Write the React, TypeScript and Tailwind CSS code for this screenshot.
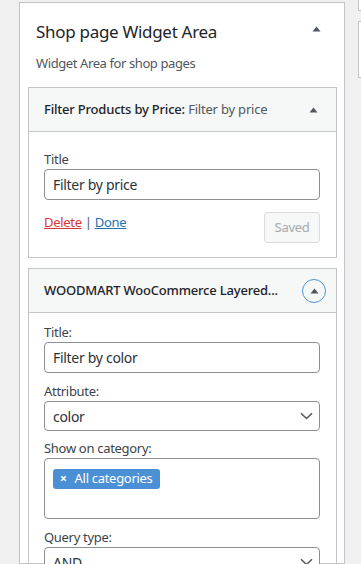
const Tri = () => (
  <svg width="9" height="6" viewBox="0 0 9 6" className="block">
    <path d="M4.5 0.5 L8.5 5.5 L0.5 5.5 Z" fill="#50575e" />
  </svg>
);

const Chevron = () => (
  <svg width="13" height="8" viewBox="0 0 13 8" className="block">
    <path d="M1 1.2 L6.5 6.5 L12 1.2" fill="none" stroke="#50575e" strokeWidth="1.5" />
  </svg>
);

const Label = ({ children }: { children: string }) => (
  <label className="block text-[13px] leading-5 text-[#3c434a]">{children}</label>
);

const TextInput = ({ value }: { value: string }) => (
  <div className="flex h-[31px] w-[276px] items-center rounded-[4px] border border-[#8c8f94] bg-white px-2 text-[14px] text-[#2c3338]">
    {value}
  </div>
);

const Select = ({ value }: { value: string }) => (
  <div className="flex h-[30px] w-[276px] items-center justify-between rounded-[4px] border border-[#8c8f94] bg-white pl-2 pr-[6px] text-[14px] text-[#2c3338]">
    <span>{value}</span>
    <Chevron />
  </div>
);

export default function App() {
  return (
    <div
      className="flex h-[564px] w-[361px] overflow-hidden bg-[#f0f0f1] tracking-[-0.3px]"
      style={{ fontFamily: '"Noto Sans", "Open Sans", sans-serif' }}
    >
      {/* sidebar */}
      <div className="ml-[19px] mt-[2px] w-[326px] shrink-0 border border-[#c3c4c7] bg-white">
        <div className="flex items-start justify-between pl-4 pr-[23px] pt-[16px]">
          <h2 className="text-[17px] leading-[26px] tracking-[-0.3px] text-[#1d2327]">Shop page Widget Area</h2>
          <div className="pt-[7px]">
            <Tri />
          </div>
        </div>
        <p className="pl-4 pt-[8px] text-[13px] leading-5 tracking-[-0.4px] text-[#50575e]">Widget Area for shop pages</p>

        {/* widget 1 */}
        <div className="ml-[8px] mt-[14px] w-[309px] border border-[#c3c4c7]">
          <div className="flex h-[44px] items-center justify-between border-b border-[#c3c4c7] bg-[#f6f7f7] pl-[15px] pr-[18px]">
            <h3 className="text-[13px] tracking-[-0.2px] text-[#1d2327]">
              <span className="font-medium">Filter Products by Price:</span>{' '}
              <span className="text-[#50575e]">Filter by price</span>
            </h3>
            <Tri />
          </div>
          <div className="pl-[15px] pr-4 pb-[14px] pt-[17px]">
            <Label>Title</Label>
            <TextInput value="Filter by price" />
            <div className="mt-[12px] flex items-start justify-between">
              <div className="text-[13px] leading-5 text-[#2271b1]">
                <a className="text-[#d63638] underline">Delete</a> <span className="text-[#50575e]">|</span>{' '}
                <a className="underline">Done</a>
              </div>
              <button className="h-[31px] w-[56px] rounded-[3px] border border-[#dcdcde] bg-[#f6f7f7] text-[13px] text-[#a7aaad]">
                Saved
              </button>
            </div>
          </div>
        </div>

        {/* widget 2 */}
        <div className="ml-[8px] mt-[10px] w-[309px] border border-b-0 border-[#c3c4c7]">
          <div className="flex h-[44px] items-center justify-between border-b border-[#c3c4c7] bg-[#f6f7f7] pl-[15px] pr-[10px]">
            <h3 className="text-[13px] font-medium tracking-[-0.2px] text-[#1d2327]">WOODMART WooCommerce Layered...</h3>
            <div className="flex h-[24px] w-[24px] items-center justify-center rounded-full border-[1.5px] border-[#4f94d4]">
              <Tri />
            </div>
          </div>
          <div className="pl-[15px] pr-4 pt-[9px]">
            <Label>Title:</Label>
            <TextInput value="Filter by color" />
            <div className="mt-[8px]">
              <Label>Attribute:</Label>
              <Select value="color" />
            </div>
            <div className="mt-[7px]">
              <Label>Show on category:</Label>
              <div className="h-[61px] w-[276px] rounded-[4px] border border-[#8c8f94] bg-white pl-[8px] pt-[6px]">
                <span className="inline-flex h-[20px] items-center rounded-[3px] bg-[#4b90d5] pl-[7px] pr-[8px] text-[13px] text-white">
                  <span className="mr-[8px] text-[12px] font-bold">×</span>All categories
                </span>
              </div>
            </div>
            <div className="mt-[8px]">
              <Label>Query type:</Label>
              <Select value="AND" />
            </div>
          </div>
        </div>
      </div>

      {/* neighbouring column */}
      <div className="ml-[13px] flex w-[20px] shrink-0 flex-col">
        <div className="h-[11px] border-b border-l border-[#c3c4c7] bg-white" />
        <div className="mt-[10px] h-[57px] border border-[#c3c4c7] bg-white" />
      </div>
    </div>
  );
}
